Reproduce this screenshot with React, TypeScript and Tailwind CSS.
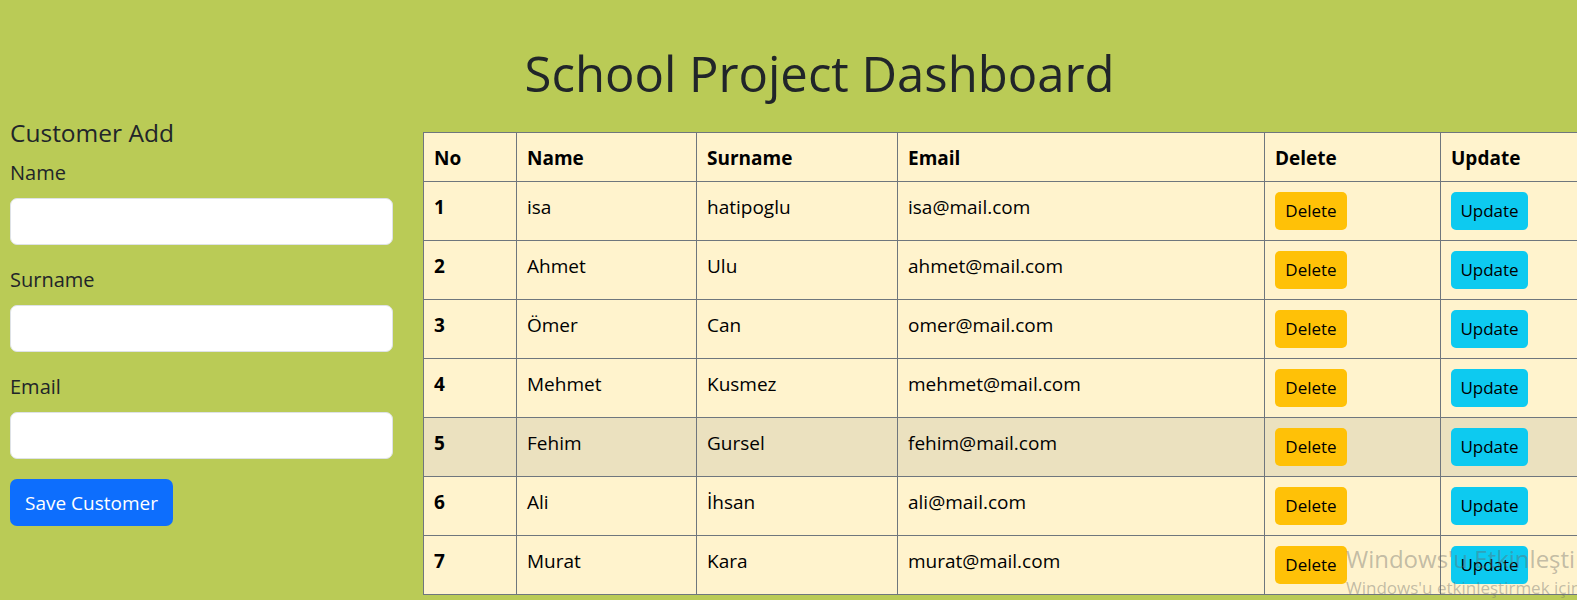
import React from "react";

const rows = [
  { no: 1, name: "isa", surname: "hatipoglu", email: "isa@mail.com" },
  { no: 2, name: "Ahmet", surname: "Ulu", email: "ahmet@mail.com" },
  { no: 3, name: "Ömer", surname: "Can", email: "omer@mail.com" },
  { no: 4, name: "Mehmet", surname: "Kusmez", email: "mehmet@mail.com" },
  { no: 5, name: "Fehim", surname: "Gursel", email: "fehim@mail.com" },
  { no: 6, name: "Ali", surname: "İhsan", email: "ali@mail.com" },
  { no: 7, name: "Murat", surname: "Kara", email: "murat@mail.com" },
];

function Field({ label }: { label: string }) {
  return (
    <div className="mb-[20px]">
      <div className="text-[20px] leading-[30px] text-[#212529] mb-[10px]">{label}</div>
      <input className="block w-full h-[47px] bg-white border border-[#dee2e6] rounded-[7px] outline-none" />
    </div>
  );
}

export default function App() {
  return (
    <div
      className="relative w-[1577px] h-[600px] overflow-hidden bg-[#bacb56]"
      style={{ fontFamily: '"Open Sans", "Noto Sans", sans-serif' }}
    >
      <div className="w-[1639px] text-center pt-[43px]">
        <h1 className="text-[49px] leading-[60px] font-normal text-[#212529]">School Project Dashboard</h1>
      </div>
      <div className="flex mt-[15px]">
        <div className="w-[383px] ml-[10px] shrink-0">
          <h5 className="text-[24.5px] leading-[30px] font-medium text-[#212529] mb-[10px]">Customer Add</h5>
          <Field label="Name" />
          <Field label="Surname" />
          <Field label="Email" />
          <button className="h-[47px] px-[15px] rounded-[7px] bg-[#0d6efd] text-white text-[19px] leading-[30px]">
            Save Customer
          </button>
        </div>
        <div className="ml-[30px] mt-[14px] shrink-0">
          <table className="table-fixed border-collapse text-black text-[19px]">
            <colgroup>
              <col className="w-[93px]" />
              <col className="w-[180px]" />
              <col className="w-[201px]" />
              <col className="w-[367px]" />
              <col className="w-[176px]" />
              <col className="w-[200px]" />
            </colgroup>
            <thead>
              <tr className="bg-[#fff3cd]">
                {["No", "Name", "Surname", "Email", "Delete", "Update"].map((h) => (
                  <th
                    key={h}
                    className="border border-[#6f767d] text-left font-bold px-[10px] pt-[10px] pb-[8px] leading-[30px]"
                  >
                    {h}
                  </th>
                ))}
              </tr>
            </thead>
            <tbody>
              {rows.map((r) => (
                <tr key={r.no} className={r.no === 5 ? "bg-[#ebe1bf]" : "bg-[#fff3cd]"}>
                  <td className="border border-[#6f767d] p-[10px] align-top leading-[30px] font-bold">{r.no}</td>
                  <td className="border border-[#6f767d] p-[10px] align-top leading-[30px]">{r.name}</td>
                  <td className="border border-[#6f767d] p-[10px] align-top leading-[30px]">{r.surname}</td>
                  <td className="border border-[#6f767d] p-[10px] align-top leading-[30px]">{r.email}</td>
                  <td className="border border-[#6f767d] p-[10px] align-top">
                    <button className="h-[38px] w-[72px] rounded-[5px] bg-[#ffc107] text-black text-[17px] leading-[26px]">
                      Delete
                    </button>
                  </td>
                  <td className="border border-[#6f767d] p-[10px] align-top">
                    <button className="h-[38px] w-[77px] rounded-[5px] bg-[#0dcaf0] text-black text-[17px] leading-[26px]">
                      Update
                    </button>
                  </td>
                </tr>
              ))}
            </tbody>
          </table>
        </div>
      </div>
      <div className="absolute left-[1346px] top-[543px] pointer-events-none whitespace-nowrap text-[rgba(100,100,100,0.4)]">
        <div className="text-[24px] leading-[32px]">Windows'u Etkinleştirin</div>
        <div className="text-[17px] leading-[22px] mt-[2px]">Windows'u etkinleştirmek için Ayarlar'a gidin.</div>
      </div>
    </div>
  );
}
